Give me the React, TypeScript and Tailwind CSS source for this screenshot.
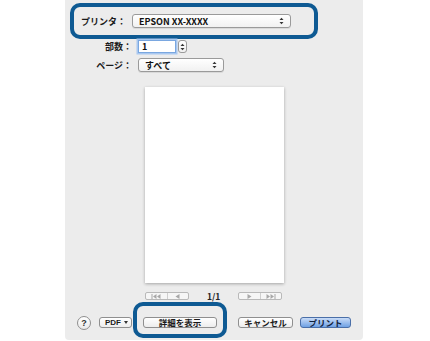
const jp = { fontFamily: '"Noto Sans CJK JP", "Liberation Sans", sans-serif' };

function Arrows() {
  return (
    <svg width="5" height="8" viewBox="0 0 5 8" className="shrink-0">
      <path d="M0.5 3 L2.5 0.8 L4.5 3 Z" fill="#333" />
      <path d="M0.5 5 L2.5 7.2 L4.5 5 Z" fill="#333" />
    </svg>
  );
}

function Popup({ label, className }: { label: string; className: string }) {
  return (
    <div
      className={`flex items-center justify-between pl-[6px] pr-[6px] rounded-[3px] border border-[#9a9a9a] bg-gradient-to-b from-white to-[#f1f1f1] shadow-[0_1px_0_rgba(0,0,0,0.08)] ${className}`}
    >
      <span className="text-[9px] font-semibold text-[#111] leading-none" style={jp}>
        {label}
      </span>
      <Arrows />
    </div>
  );
}

function Label({ text, className }: { text: string; className: string }) {
  return (
    <span
      className={`text-right text-[9px] font-semibold text-[#1a1a1a] leading-none pr-[6px] ${className}`}
      style={jp}
    >
      {text}
    </span>
  );
}

function Btn({ text, className, blue }: { text: string; className: string; blue?: boolean }) {
  return (
    <div
      className={`h-[11px] flex items-center justify-center rounded-[3px] border text-[8.5px] font-semibold leading-none ${
        blue
          ? 'border-[#4a6fa8] bg-gradient-to-b from-[#c9dcf7] to-[#6fa1e4] text-[#10203a]'
          : 'border-[#8f8f8f] bg-gradient-to-b from-white to-[#ededed] text-[#1a1a1a]'
      } ${className}`}
      style={jp}
    >
      {text}
    </div>
  );
}

function NavGroup({ left }: { left?: boolean }) {
  const c = '#a8a8a8';
  return (
    <div className="h-[8px] w-[44px] flex rounded-[2px] border border-[#b9b9b9] bg-[#f6f6f6]">
      <div className="flex-1 flex items-center justify-center border-r border-[#cfcfcf]">
        {left ? (
          <svg width="10" height="5" viewBox="0 0 10 5">
            <rect x="0.5" y="0" width="1" height="5" fill={c} />
            <path d="M5.5 0 L2 2.5 L5.5 5 Z M9.5 0 L6 2.5 L9.5 5 Z" fill={c} />
          </svg>
        ) : (
          <svg width="5" height="5" viewBox="0 0 5 5">
            <path d="M0.5 0 L4.5 2.5 L0.5 5 Z" fill={c} />
          </svg>
        )}
      </div>
      <div className="flex-1 flex items-center justify-center">
        {left ? (
          <svg width="5" height="5" viewBox="0 0 5 5">
            <path d="M4.5 0 L0.5 2.5 L4.5 5 Z" fill={c} />
          </svg>
        ) : (
          <svg width="10" height="5" viewBox="0 0 10 5">
            <path d="M0.5 0 L4 2.5 L0.5 5 Z M4.5 0 L8 2.5 L4.5 5 Z" fill={c} />
            <rect x="8.5" y="0" width="1" height="5" fill={c} />
          </svg>
        )}
      </div>
    </div>
  );
}

export default function App() {
  return (
    <div className="w-[430px] h-[341px] bg-white overflow-hidden">
      <div className="ml-[65px] w-[298px] h-[340px] bg-[#ececec] rounded-b-[4px] flex flex-col">
        {/* Printer */}
        <div className="mt-[3px] ml-[5px] w-[248px] h-[36px] border-4 border-[#0e5a93] rounded-[10px] flex items-center">
          <Label text="プリンタ：" className="w-[58px]" />
          <Popup label="EPSON XX-XXXX" className="w-[159px] h-[14px]" />
        </div>

        {/* Copies */}
        <div className="mt-[1px] h-[13px] flex items-center">
          <Label text="部数：" className="w-[73px]" />
          <div className="w-[38px] h-[13px] bg-white border border-[#7aa7e0] shadow-[0_0_0_1.5px_#a9c8f0] flex items-center pl-[3px]">
            <span className="text-[9px] font-semibold leading-none text-[#111]" style={jp}>1</span>
          </div>
          <div className="ml-[2px] w-[9px] h-[13px] rounded-[3px] border border-[#9a9a9a] bg-gradient-to-b from-white to-[#f0f0f0] flex items-center justify-center">
            <Arrows />
          </div>
        </div>

        {/* Pages */}
        <div className="mt-[5px] h-[14px] flex items-center">
          <Label text="ページ：" className="w-[73px]" />
          <Popup label="すべて" className="w-[86px] h-[14px]" />
        </div>

        {/* Preview */}
        <div className="mt-[15px] ml-[80px] w-[139px] h-[196px] bg-white shadow-[0_1px_3px_rgba(0,0,0,0.3)]" />

        {/* Page nav */}
        <div className="mt-[9px] h-[8px] flex items-center">
          <div className="ml-[80px]">
            <NavGroup left />
          </div>
          <span className="ml-[18px] w-[13px] text-[8.5px] font-semibold leading-none text-[#222]" style={jp}>
            1/1
          </span>
          <div className="ml-[18px]">
            <NavGroup />
          </div>
        </div>

        {/* Bottom buttons */}
        <div className="mt-[2px] h-[36px] flex items-start">
          <div className="mt-[14px] ml-[12px] w-[14px] h-[14px] rounded-full border border-[#8f8f8f] bg-gradient-to-b from-white to-[#eaeaea] flex items-center justify-center">
            <span className="text-[9px] font-bold leading-none text-[#333]" style={{ fontFamily: '"Liberation Sans", sans-serif' }}>?</span>
          </div>
          <div className="mt-[15px] ml-[8px] w-[33px] h-[11px] flex items-center justify-between pl-[5px] pr-[3px] rounded-[3px] border border-[#8f8f8f] bg-gradient-to-b from-white to-[#ededed]">
            <span className="text-[8px] font-semibold leading-none text-[#1a1a1a]" style={{ fontFamily: '"Liberation Sans", sans-serif' }}>PDF</span>
            <svg width="4" height="3" viewBox="0 0 4 3">
              <path d="M0 0 L4 0 L2 3 Z" fill="#333" />
            </svg>
          </div>
          <div className="ml-[1px] w-[94px] h-[36px] border-4 border-[#0e5a93] rounded-[10px] flex justify-center pt-[11px]">
            <Btn text="詳細を表示" className="w-[74px]" />
          </div>
          <Btn text="キャンセル" className="mt-[15px] ml-[11px] w-[55px]" />
          <Btn text="プリント" blue className="mt-[15px] ml-[7px] w-[51px]" />
        </div>
      </div>
    </div>
  );
}
